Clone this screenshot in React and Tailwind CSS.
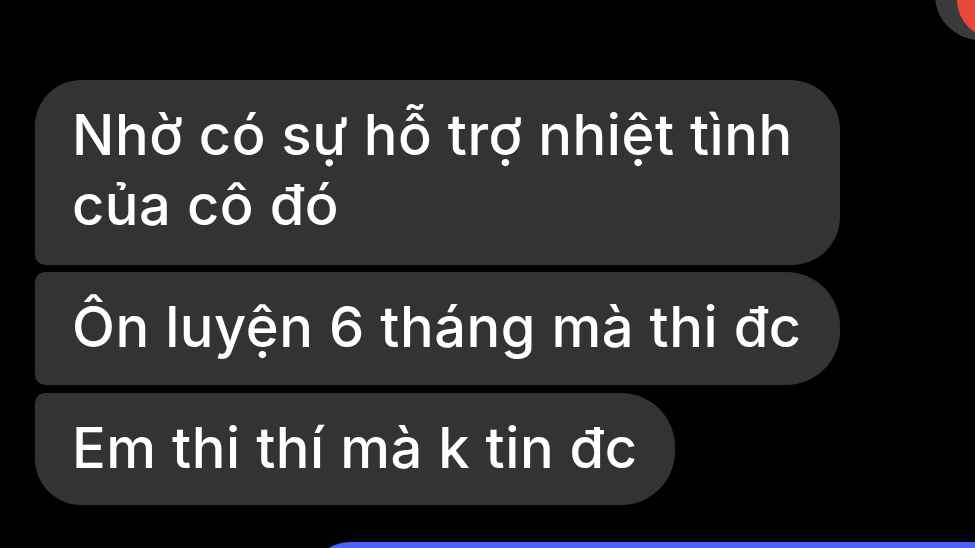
export default function App() {
  return (
    <div
      className="relative h-[548px] w-[975px] overflow-hidden bg-black text-white"
      style={{ fontFamily: 'Inter, "Noto Sans", sans-serif' }}
    >
      <div className="absolute left-[935px] top-[-50px] h-[90px] w-[90px] overflow-hidden rounded-full bg-[#3a3a3a]">
        <div className="absolute left-[22px] top-[12px] h-[76px] w-[76px] rounded-full bg-[#e8473a]" />
      </div>

      <div className="flex flex-col items-start gap-[7px] pl-[35px] pt-[80px]">
        <div className="w-[805px] rounded-tl-[46px] rounded-tr-[50px] rounded-br-[48px] rounded-bl-[10px] bg-[#333333] pl-[37px] pr-[20px] pt-[20px] pb-[25px] text-[56px] font-medium leading-[70px] tracking-[0.55px]">
          Nhờ có sự hỗ trợ nhiệt tình của cô đó
        </div>
        <div className="w-[805px] rounded-tl-[10px] rounded-bl-[10px] rounded-r-[54px] bg-[#333333] pl-[37px] pr-[20px] pt-[20px] pb-[23px] text-[56px] font-medium leading-[70px] tracking-[0.55px] whitespace-nowrap">
          Ôn luyện 6 tháng mà thi đc
        </div>
        <div className="mt-[1px] w-[640px] rounded-tl-[10px] rounded-bl-[46px] rounded-r-[54px] bg-[#333333] pl-[37px] pr-[20px] pt-[20px] pb-[22px] text-[56px] font-medium leading-[70px] tracking-[0.55px] whitespace-nowrap">
          Em thi thí mà k tin đc
        </div>
        <div className="ml-[275px] mt-[30px] h-[60px] w-[700px] rounded-tl-[40px] bg-[#4b64f7]" />
      </div>
    </div>
  );
}
